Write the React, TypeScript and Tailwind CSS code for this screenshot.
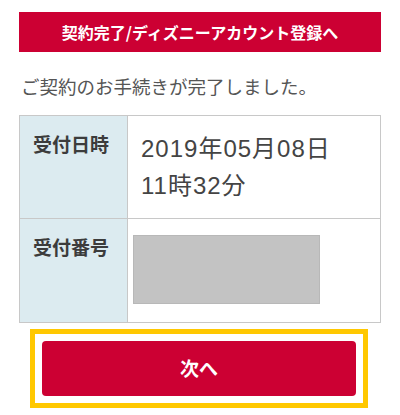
const jp = { fontFamily: '"Noto Sans CJK JP", sans-serif' };

function Row({ label, children, className }: { label: string; children: React.ReactNode; className?: string }) {
  return (
    <div className={`flex h-[103px] ${className ?? ''}`}>
      <div className="w-[108px] shrink-0 border-r border-[#c8c8c8] bg-[#dcebf0] pl-[13px] pt-[14px] text-[19px] leading-[27px] font-bold text-[#3c3c3c]">
        {label}
      </div>
      <div className="flex-1">{children}</div>
    </div>
  );
}

export default function App() {
  return (
    <div className="min-h-[415px] bg-white px-[19px] pt-[12px]" style={jp}>
      <div className="flex h-[40px] items-center justify-center bg-[#cc0033] text-[16px] font-bold text-white">
        契約完了/ディズニーアカウント登録へ
      </div>

      <p className="mt-[21px] mb-[15px] pl-[2px] text-[18.5px] leading-[27px] text-[#555]">
        ご契約のお手続きが完了しました。
      </p>

      <div className="border border-[#c8c8c8]">
        <Row label="受付日時" className="border-b border-[#c8c8c8]">
          <div
            className="pl-[13px] pt-[14px] text-[24px] leading-[37px] tracking-[1px] text-[#444]"
            style={{ fontFamily: '"Liberation Sans", "Noto Sans CJK JP", sans-serif' }}
          >
            <div>2019年05月08日</div>
            <div>11時32分</div>
          </div>
        </Row>
        <Row label="受付番号">
          <div className="ml-[5px] mt-[16px] h-[69px] w-[187px] border border-[#b8b8b8] bg-[#c3c3c3]" />
        </Row>
      </div>

      <div className="mt-[6px] ml-[11px] w-[338px] border-[5px] border-[#ffc800] p-[7px]">
        <button className="flex h-[55px] w-full items-center justify-center rounded-[4px] bg-[#cc0033] text-[19px] font-bold text-white">
          次へ
        </button>
      </div>
    </div>
  );
}
